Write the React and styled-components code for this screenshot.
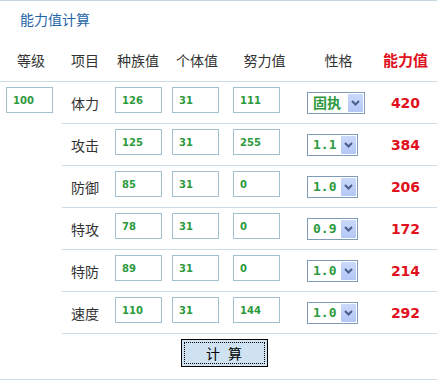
import React from 'react'
import styled, { createGlobalStyle } from 'styled-components'

const GlobalStyle = createGlobalStyle`
    * {
        box-sizing: border-box;
    }
    body {
        margin: 0;
        background: #ffffff;
        font-family: "Noto Sans CJK SC", "DejaVu Sans", sans-serif;
    }
`

const Panel = styled.div`
    width: 437px;
    border-top: 1px solid #c6d7e4;
    background: #ffffff;
`

const Title = styled.h4`
    margin: 0;
    padding: 8px 20px 10px;
    font-size: 14px;
    font-weight: normal;
    line-height: 20px;
    color: #1f66a8;
`

const cols = '46px 60px 58px 77px 71px 63px'

const HeaderRow = styled.div`
    display: grid;
    grid-template-columns: 62px ${cols};
    align-items: center;
    height: 43px;
    border-bottom: 1px solid #cddbe6;
`

const HeadCell = styled.div`
    text-align: center;
    line-height: 20px;
    color: ${(p) => (p.$accent ? '#e0101c' : '#333333')};
    font-weight: ${(p) => (p.$accent ? 'bold' : 'normal')};
    font-size: ${(p) => (p.$accent ? '15px' : '14px')};
`

const Body = styled.div`
    display: grid;
    grid-template-columns: 62px 1fr;
`

const LevelCell = styled.div`
    display: flex;
    align-items: flex-start;
    padding-left: 6px;
`

const Rows = styled.div`
    display: flex;
    flex-direction: column;
`

const Row = styled.div`
    display: grid;
    grid-template-columns: ${cols};
    height: 42px;
    border-bottom: 1px solid #cddbe6;
`

const Label = styled.div`
    align-self: center;
    text-align: center;
    font-size: 14px;
    line-height: 20px;
    color: #333333;
`

const Cell = styled.div`
    padding-left: ${(p) => p.$offset}px;
    display: flex;
    align-items: ${(p) => (p.$middle ? 'center' : 'flex-start')};
`

const Field = styled.input`
    width: 47px;
    height: 26px;
    margin-top: 5px;
    padding: 0 6px;
    border: 1px solid #a2c0d0;
    background: #ffffff;
    font-family: "DejaVu Sans", sans-serif;
    font-size: 10px;
    font-weight: bold;
    color: #2e9a3e;
    outline: none;
`

const Select = styled.div`
    width: ${(p) => p.$width}px;
    height: 22px;
    display: flex;
    align-items: center;
    justify-content: space-between;
    padding: 1px;
    border: 1px solid #7f9db9;
    background: #ffffff;
`

const SelectValue = styled.span`
    padding-left: 4px;
    font-family: "DejaVu Sans Mono", "Noto Sans CJK SC", monospace;
    font-size: ${(p) => (p.$wide ? '14px' : '13px')};
    font-weight: bold;
    line-height: 18px;
    color: #2e9a3e;
`

const ArrowBox = styled.span`
    width: 15px;
    height: 18px;
    display: flex;
    align-items: center;
    justify-content: center;
    border-radius: 1px;
    background: linear-gradient(#cad9fb, #b3c7f5);
`

const Stat = styled.div`
    align-self: center;
    text-align: center;
    font-family: "DejaVu Sans", sans-serif;
    font-size: 14px;
    font-weight: bold;
    color: #e0101c;
`

const ButtonRow = styled.div`
    display: flex;
    justify-content: center;
    padding: 5px 0 12px 11px;
    border-bottom: 1px solid #cddbe6;
`

const CalcButton = styled.button`
    width: 87px;
    height: 28px;
    border: 1px solid #000000;
    background: #cfe2f2;
    outline: 1px dotted #000000;
    outline-offset: -4px;
    font-family: "Noto Sans CJK SC", sans-serif;
    font-size: 14px;
    word-spacing: 5px;
    color: #000000;
    padding: 0;
`

const stats = [
    { name: '体力', base: 126, iv: 31, ev: 111, nature: '固执', wide: true, value: 420 },
    { name: '攻击', base: 125, iv: 31, ev: 255, nature: '1.1', value: 384 },
    { name: '防御', base: 85, iv: 31, ev: 0, nature: '1.0', value: 206 },
    { name: '特攻', base: 78, iv: 31, ev: 0, nature: '0.9', value: 172 },
    { name: '特防', base: 89, iv: 31, ev: 0, nature: '1.0', value: 214 },
    { name: '速度', base: 110, iv: 31, ev: 144, nature: '1.0', value: 292 }
]

function Chevron() {
    return (
        <svg width="9" height="6" viewBox="0 0 9 6">
            <polyline points="1,1 4.5,4.5 8,1" fill="none" stroke="#4a5d8c" strokeWidth="2" />
        </svg>
    )
}

export default function App() {
    return (
        <Panel>
            <GlobalStyle />
            <Title>{'能力值计算'}</Title>
            <HeaderRow>
                <HeadCell>{'等级'}</HeadCell>
                <HeadCell>{'项目'}</HeadCell>
                <HeadCell>{'种族值'}</HeadCell>
                <HeadCell>{'个体值'}</HeadCell>
                <HeadCell>{'努力值'}</HeadCell>
                <HeadCell>{'性格'}</HeadCell>
                <HeadCell $accent>{'能力值'}</HeadCell>
            </HeaderRow>
            <Body>
                <LevelCell>
                    <Field defaultValue="100" />
                </LevelCell>
                <Rows>
                    {stats.map((s) => (
                        <Row key={s.name}>
                            <Label>{s.name}</Label>
                            <Cell $offset={7}><Field defaultValue={s.base} /></Cell>
                            <Cell $offset={4}><Field defaultValue={s.iv} /></Cell>
                            <Cell $offset={7}><Field defaultValue={s.ev} /></Cell>
                            <Cell $offset={4} $middle>
                                <Select $width={s.wide ? 58 : 51}>
                                    <SelectValue $wide={s.wide}>{s.nature}</SelectValue>
                                    <ArrowBox><Chevron /></ArrowBox>
                                </Select>
                            </Cell>
                            <Stat>{s.value}</Stat>
                        </Row>
                    ))}
                </Rows>
            </Body>
            <ButtonRow>
                <CalcButton>{'计 算'}</CalcButton>
            </ButtonRow>
        </Panel>
    )
}
